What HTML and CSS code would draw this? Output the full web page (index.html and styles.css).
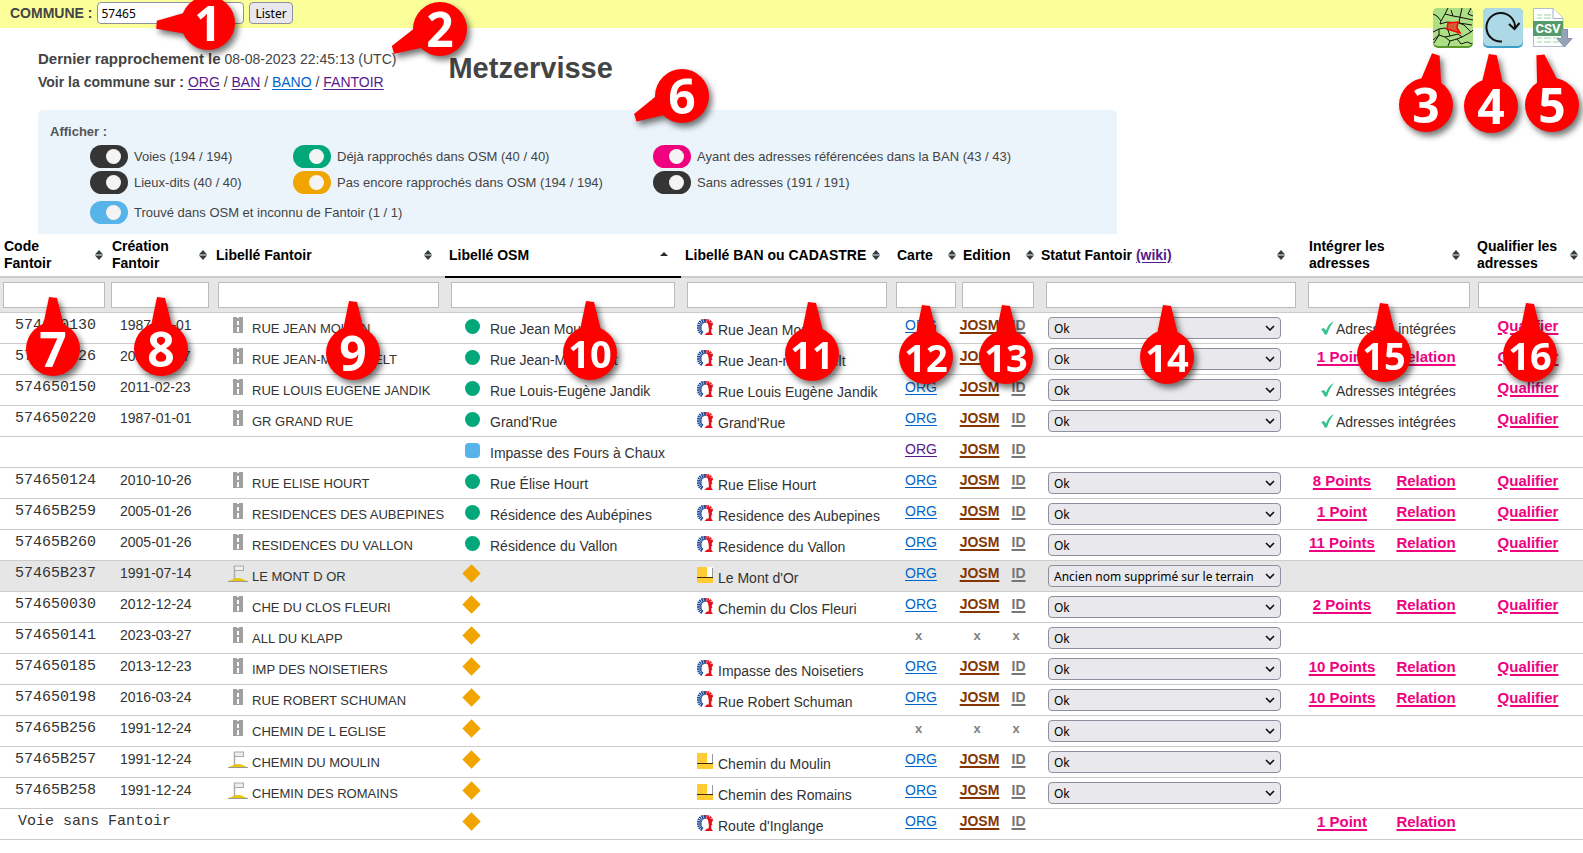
FILE: index.html
```html
<!DOCTYPE html>
<html lang="fr">
<head>
<meta charset="utf-8">
<title>Metzervisse - rapprochement Fantoir</title>
<link rel="stylesheet" href="styles.css">
</head>
<body>
<svg class="sprite" aria-hidden="true">
  <symbol id="sort" viewBox="0 0 8 10"><path d="M0 4.500L4 0L8 4.500zM0 5.500L4 10L8 5.500z" fill="#333c40"/><path d="M0 5H8" stroke="#8d9294"/></symbol>
  <symbol id="asc" viewBox="0 0 8 10"><path d="M0 6L4 2L8 6z" fill="#222b30"/></symbol>
  <symbol id="road" viewBox="0 0 10 16"><path d="M0 0H4V1H6V0H10V16H0z" fill="#a0a0a0"/><path d="M4 4H6V8H4zM4 10H6V15H4z" fill="#fff"/></symbol>
  <symbol id="flag" viewBox="0 0 20 18"><path d="M0 16.500C4 15 6 13 10 13S16 15 20 16.500z" fill="#e6c700"/><path d="M0 16.500H20" stroke="#999"/><path d="M6.500 1V14" stroke="#aaa" stroke-width="1.500"/><rect x="6.500" y="1" width="9" height="4.500" fill="#eee" stroke="#aaa"/></symbol>
  <symbol id="ban" viewBox="0 0 16 16"><g fill="none"><path d="M8 2C4 1.500 2 4 2 8S3 13 6 14.500" stroke="#1c4a97" stroke-width="4" stroke-dasharray="1.400 .6"/><path d="M7 3.500C4.500 4.500 4 7 4 9S4.500 12.500 6 13.500" stroke="#1c4a97" stroke-width="1"/><path d="M8 2C12 1.500 14 3.500 14 6" stroke="#e1101c" stroke-width="4" stroke-dasharray="1.600 .5"/><path d="M11 3C14 5 13 8 13 14" stroke="#e1101c" stroke-width="2.500"/></g><path d="M7.500 16L10 13.500H14L16 16zM11 4L16 5L14.500 8L15.500 10H12z" fill="#e1101c"/></symbol>
  <symbol id="cadastre" viewBox="0 0 16 16"><path d="M0 0H16V16H0z" fill="#fc3"/><path d="M10 0H16V10H10z" fill="#fff"/><path d="M0 10.500H16" stroke="#3a2c10"/><path d="M15.500 1V10" stroke="#999"/></symbol>
  <symbol id="check" viewBox="0 0 14 14"><path d="M1 8L4 7L6 9.500C7.500 5 10 2 14 0C11 4 8.500 8 7 13.500H4.500C4 11.500 2.500 9.500 1 8z" fill="#35c28c"/></symbol>
  <symbol id="tail" viewBox="-60 -60 120 120"><path d="M-4 -52L4 -51L11 -23H-10z" fill="red"/></symbol>
</svg>

<form class="topbar">
  <label for="commune">COMMUNE :</label>
  <input id="commune" class="commune" type="text" value="57465">
  <button class="list-button" type="button">Lister</button>
</form>

<nav class="tools" aria-label="Outils">
  <a href="#" aria-label="Carte"><svg viewBox="0 0 40 40" width="40" height="40"><rect width="40" height="40" rx="5" fill="#5a9a2c"/><rect width="40" height="38" rx="5" fill="#addf85"/><g fill="none" stroke="#111" stroke-width="1"><path d="M0 6L4 8L8 13L7 16L14 14L26 15L39 17M15 0L12 6L20 8L26 9L40 12M12 6L8 13M29 0L27 9L26 15L31 17L38 24L40 22M20 8L18 2M0 24L6 21L12 20L15 22L17 28L25 26L29 29L38 24M0 32L6 27L12 29L17 28M6 21L6 27L1 35M12 29L17 33L15 38M17 33L24 31L29 29M24 31L28 36L34 34L39 36M38 0L35 6L40 8"/></g><path d="M15 15L25 14L24 20L27 25L14 21z" fill="#d05c38" stroke="red" stroke-width="1.500"/></svg></a>
  <a href="#" aria-label="Rafraîchir"><svg viewBox="0 0 40 40" width="40" height="40"><rect width="40" height="40" rx="5" fill="#3a9fc8"/><rect width="40" height="38" rx="5" fill="#add8e6"/><path d="M19 33.500A14.300 14.300 0 1 1 32 20V21M26 16L31.500 21L36.500 15" fill="none" stroke="#111" stroke-width="2"/></svg></a>
  <a href="#" aria-label="Exporter en CSV"><svg viewBox="0 0 40 40" width="40" height="40"><path d="M.5 .5H20L30 10V38.500H.5z" fill="#fdfefe" stroke="#b3bcc8"/><path d="M20 .5V10.500H30" fill="#fff" stroke="#a5b0bf"/><path d="M4 7H9M11 7H18M4 10H9M11 10H18M4 30H9M11 30H18M20 30H26M4 34H9M11 34H18M20 34H26" stroke="#cfe8cf" stroke-width="2"/><path d="M0 13H30V28H0z" fill="#549a6b"/><text class="csv-text" x="15" y="25" text-anchor="middle">CSV</text><path d="M28.500 21.500H34.500V30.500H39L31.500 39L24 30.500H28.500z" fill="#94a3b8" stroke="#8190a6"/></svg></a>
</nav>

<header class="summary">
  <div class="meta">
    <div><strong class="stamp">Dernier rapprochement le</strong> 08-08-2023 22:45:13 (UTC)</div>
    <div><strong>Voir la commune sur :</strong> <a class="visited" href="#">ORG</a> / <a class="visited" href="#">BAN</a> / <a href="#">BANO</a> / <a class="visited" href="#">FANTOIR</a></div>
  </div>
  <h1>Metzervisse</h1>
</header>

<section class="filters">
  <h2>Afficher :</h2>
  <div class="filter-grid">
    <label><input class="toggle dark" type="checkbox" checked>Voies (194 / 194)</label>
    <label><input class="toggle green" type="checkbox" checked>Déjà rapprochés dans OSM (40 / 40)</label>
    <label><input class="toggle pink" type="checkbox" checked>Ayant des adresses référencées dans la BAN (43 / 43)</label>
    <label><input class="toggle dark" type="checkbox" checked>Lieux-dits (40 / 40)</label>
    <label><input class="toggle orange" type="checkbox" checked>Pas encore rapprochés dans OSM (194 / 194)</label>
    <label><input class="toggle dark" type="checkbox" checked>Sans adresses (191 / 191)</label>
  </div>
  <div class="filter-last">
    <label><input class="toggle blue" type="checkbox" checked>Trouvé dans OSM et inconnu de Fantoir (1 / 1)</label>
  </div>
</section>

<table class="list">
  <colgroup><col class="c-code"><col class="c-date"><col class="c-fantoir"><col class="c-osm"><col class="c-ban"><col class="c-map"><col class="c-josm"><col class="c-id"><col class="c-status"><col class="c-points"><col class="c-relation"><col class="c-qualify"></colgroup>
  <thead>
    <tr class="heads">
      <th><div class="head">Code<br>Fantoir<svg class="sort"><use href="#sort"/></svg></div></th>
      <th><div class="head">Création<br>Fantoir<svg class="sort"><use href="#sort"/></svg></div></th>
      <th><div class="head wide">Libellé Fantoir<svg class="sort"><use href="#sort"/></svg></div></th>
      <th class="sorted"><div class="head wide">Libellé OSM<svg class="sort"><use href="#asc"/></svg></div></th>
      <th><div class="head wide">Libellé BAN ou CADASTRE<svg class="sort"><use href="#sort"/></svg></div></th>
      <th><div class="head tight">Carte<svg class="sort"><use href="#sort"/></svg></div></th>
      <th colspan="2"><div class="head tight">Edition<svg class="sort"><use href="#sort"/></svg></div></th>
      <th><div class="head widest"><span>Statut Fantoir <a class="visited" href="#">(wiki)</a></span><svg class="sort"><use href="#sort"/></svg></div></th>
      <th colspan="2"><div class="head wide">Intégrer les<br>adresses<svg class="sort"><use href="#sort"/></svg></div></th>
      <th><div class="head">Qualifier les<br>adresses<svg class="sort"><use href="#sort"/></svg></div></th>
    </tr>
    <tr class="search">
      <td><input type="text" aria-label="Filtrer Code Fantoir"></td>
      <td><input type="text" aria-label="Filtrer Création Fantoir"></td>
      <td class="mid"><input type="text" aria-label="Filtrer Libellé Fantoir"></td>
      <td class="mid"><input type="text" aria-label="Filtrer Libellé OSM"></td>
      <td class="mid"><input type="text" aria-label="Filtrer Libellé BAN ou CADASTRE"></td>
      <td><input type="text" aria-label="Filtrer Carte"></td>
      <td colspan="2"><input type="text" aria-label="Filtrer Edition"></td>
      <td class="big"><input type="text" aria-label="Filtrer Statut Fantoir"></td>
      <td colspan="2"><input type="text" aria-label="Filtrer Intégrer les adresses"></td>
      <td class="last"><input type="text" aria-label="Filtrer Qualifier les adresses"></td>
    </tr>
  </thead>
  <tbody>
    <tr><td class="code">574650130</td><td class="date">1987-01-01</td><td><div class="fantoir"><svg class="road"><use href="#road"/></svg>RUE JEAN MOULIN</div></td><td><div class="osm"><i class="dot"></i>Rue Jean Moulin</div></td><td><div class="ban"><svg class="pic"><use href="#ban"/></svg>Rue Jean Moulin</div></td><td class="map"><a href="#">ORG</a></td><td class="josm"><a href="#">JOSM</a></td><td class="id"><a href="#">ID</a></td><td class="status"><select aria-label="Statut"><option>Ok</option></select></td><td colspan="2"><div class="done"><svg class="check"><use href="#check"/></svg>Adresses intégrées</div></td><td class="pink-link"><a href="#">Qualifier</a></td></tr>
    <tr><td class="code">574650126</td><td class="date">2008-11-07</td><td><div class="fantoir"><svg class="road"><use href="#road"/></svg>RUE JEAN-MARIE PELT</div></td><td><div class="osm"><i class="dot"></i>Rue Jean-Marie Pelt</div></td><td><div class="ban"><svg class="pic"><use href="#ban"/></svg>Rue Jean-marie Pelt</div></td><td class="map"><a href="#">ORG</a></td><td class="josm"><a href="#">JOSM</a></td><td class="id"><a href="#">ID</a></td><td class="status"><select aria-label="Statut"><option>Ok</option></select></td><td class="pink-link"><a href="#">1 Point</a></td><td class="pink-link"><a href="#">Relation</a></td><td class="pink-link"><a href="#">Qualifier</a></td></tr>
    <tr><td class="code">574650150</td><td class="date">2011-02-23</td><td><div class="fantoir"><svg class="road"><use href="#road"/></svg>RUE LOUIS EUGENE JANDIK</div></td><td><div class="osm"><i class="dot"></i>Rue Louis-Eugène Jandik</div></td><td><div class="ban"><svg class="pic"><use href="#ban"/></svg>Rue Louis Eugène Jandik</div></td><td class="map"><a href="#">ORG</a></td><td class="josm"><a href="#">JOSM</a></td><td class="id"><a href="#">ID</a></td><td class="status"><select aria-label="Statut"><option>Ok</option></select></td><td colspan="2"><div class="done"><svg class="check"><use href="#check"/></svg>Adresses intégrées</div></td><td class="pink-link"><a href="#">Qualifier</a></td></tr>
    <tr><td class="code">574650220</td><td class="date">1987-01-01</td><td><div class="fantoir"><svg class="road"><use href="#road"/></svg>GR GRAND RUE</div></td><td><div class="osm"><i class="dot"></i>Grand'Rue</div></td><td><div class="ban"><svg class="pic"><use href="#ban"/></svg>Grand'Rue</div></td><td class="map"><a href="#">ORG</a></td><td class="josm"><a href="#">JOSM</a></td><td class="id"><a href="#">ID</a></td><td class="status"><select aria-label="Statut"><option>Ok</option></select></td><td colspan="2"><div class="done"><svg class="check"><use href="#check"/></svg>Adresses intégrées</div></td><td class="pink-link"><a href="#">Qualifier</a></td></tr>
    <tr><td></td><td></td><td></td><td><div class="osm"><i class="dot square"></i>Impasse des Fours à Chaux</div></td><td></td><td class="map"><a class="visited" href="#">ORG</a></td><td class="josm"><a href="#">JOSM</a></td><td class="id"><a href="#">ID</a></td><td></td><td></td><td></td><td></td></tr>
    <tr><td class="code">574650124</td><td class="date">2010-10-26</td><td><div class="fantoir"><svg class="road"><use href="#road"/></svg>RUE ELISE HOURT</div></td><td><div class="osm"><i class="dot"></i>Rue Élise Hourt</div></td><td><div class="ban"><svg class="pic"><use href="#ban"/></svg>Rue Elise Hourt</div></td><td class="map"><a href="#">ORG</a></td><td class="josm"><a href="#">JOSM</a></td><td class="id"><a href="#">ID</a></td><td class="status"><select aria-label="Statut"><option>Ok</option></select></td><td class="pink-link"><a href="#">8 Points</a></td><td class="pink-link"><a href="#">Relation</a></td><td class="pink-link"><a href="#">Qualifier</a></td></tr>
    <tr><td class="code">57465B259</td><td class="date">2005-01-26</td><td><div class="fantoir"><svg class="road"><use href="#road"/></svg>RESIDENCES DES AUBEPINES</div></td><td><div class="osm"><i class="dot"></i>Résidence des Aubépines</div></td><td><div class="ban"><svg class="pic"><use href="#ban"/></svg>Residence des Aubepines</div></td><td class="map"><a href="#">ORG</a></td><td class="josm"><a href="#">JOSM</a></td><td class="id"><a href="#">ID</a></td><td class="status"><select aria-label="Statut"><option>Ok</option></select></td><td class="pink-link"><a href="#">1 Point</a></td><td class="pink-link"><a href="#">Relation</a></td><td class="pink-link"><a href="#">Qualifier</a></td></tr>
    <tr><td class="code">57465B260</td><td class="date">2005-01-26</td><td><div class="fantoir"><svg class="road"><use href="#road"/></svg>RESIDENCES DU VALLON</div></td><td><div class="osm"><i class="dot"></i>Résidence du Vallon</div></td><td><div class="ban"><svg class="pic"><use href="#ban"/></svg>Residence du Vallon</div></td><td class="map"><a href="#">ORG</a></td><td class="josm"><a href="#">JOSM</a></td><td class="id"><a href="#">ID</a></td><td class="status"><select aria-label="Statut"><option>Ok</option></select></td><td class="pink-link"><a href="#">11 Points</a></td><td class="pink-link"><a href="#">Relation</a></td><td class="pink-link"><a href="#">Qualifier</a></td></tr>
    <tr class="removed"><td class="code">57465B237</td><td class="date">1991-07-14</td><td><div class="fantoir"><svg class="flag"><use href="#flag"/></svg>LE MONT D OR</div></td><td><div class="osm"><i class="dot diamond"></i></div></td><td><div class="ban"><svg class="pic"><use href="#cadastre"/></svg>Le Mont d'Or</div></td><td class="map"><a href="#">ORG</a></td><td class="josm"><a href="#">JOSM</a></td><td class="id"><a href="#">ID</a></td><td class="status"><select aria-label="Statut"><option>Ancien nom supprimé sur le terrain</option></select></td><td></td><td></td><td></td></tr>
    <tr><td class="code">574650030</td><td class="date">2012-12-24</td><td><div class="fantoir"><svg class="road"><use href="#road"/></svg>CHE DU CLOS FLEURI</div></td><td><div class="osm"><i class="dot diamond"></i></div></td><td><div class="ban"><svg class="pic"><use href="#ban"/></svg>Chemin du Clos Fleuri</div></td><td class="map"><a href="#">ORG</a></td><td class="josm"><a href="#">JOSM</a></td><td class="id"><a href="#">ID</a></td><td class="status"><select aria-label="Statut"><option>Ok</option></select></td><td class="pink-link"><a href="#">2 Points</a></td><td class="pink-link"><a href="#">Relation</a></td><td class="pink-link"><a href="#">Qualifier</a></td></tr>
    <tr><td class="code">574650141</td><td class="date">2023-03-27</td><td><div class="fantoir"><svg class="road"><use href="#road"/></svg>ALL DU KLAPP</div></td><td><div class="osm"><i class="dot diamond"></i></div></td><td></td><td class="map none">x</td><td class="josm none">x</td><td class="id none">x</td><td class="status"><select aria-label="Statut"><option>Ok</option></select></td><td></td><td></td><td></td></tr>
    <tr><td class="code">574650185</td><td class="date">2013-12-23</td><td><div class="fantoir"><svg class="road"><use href="#road"/></svg>IMP DES NOISETIERS</div></td><td><div class="osm"><i class="dot diamond"></i></div></td><td><div class="ban"><svg class="pic"><use href="#ban"/></svg>Impasse des Noisetiers</div></td><td class="map"><a href="#">ORG</a></td><td class="josm"><a href="#">JOSM</a></td><td class="id"><a href="#">ID</a></td><td class="status"><select aria-label="Statut"><option>Ok</option></select></td><td class="pink-link"><a href="#">10 Points</a></td><td class="pink-link"><a href="#">Relation</a></td><td class="pink-link"><a href="#">Qualifier</a></td></tr>
    <tr><td class="code">574650198</td><td class="date">2016-03-24</td><td><div class="fantoir"><svg class="road"><use href="#road"/></svg>RUE ROBERT SCHUMAN</div></td><td><div class="osm"><i class="dot diamond"></i></div></td><td><div class="ban"><svg class="pic"><use href="#ban"/></svg>Rue Robert Schuman</div></td><td class="map"><a href="#">ORG</a></td><td class="josm"><a href="#">JOSM</a></td><td class="id"><a href="#">ID</a></td><td class="status"><select aria-label="Statut"><option>Ok</option></select></td><td class="pink-link"><a href="#">10 Points</a></td><td class="pink-link"><a href="#">Relation</a></td><td class="pink-link"><a href="#">Qualifier</a></td></tr>
    <tr><td class="code">57465B256</td><td class="date">1991-12-24</td><td><div class="fantoir"><svg class="road"><use href="#road"/></svg>CHEMIN DE L EGLISE</div></td><td><div class="osm"><i class="dot diamond"></i></div></td><td></td><td class="map none">x</td><td class="josm none">x</td><td class="id none">x</td><td class="status"><select aria-label="Statut"><option>Ok</option></select></td><td></td><td></td><td></td></tr>
    <tr><td class="code">57465B257</td><td class="date">1991-12-24</td><td><div class="fantoir"><svg class="flag"><use href="#flag"/></svg>CHEMIN DU MOULIN</div></td><td><div class="osm"><i class="dot diamond"></i></div></td><td><div class="ban"><svg class="pic"><use href="#cadastre"/></svg>Chemin du Moulin</div></td><td class="map"><a href="#">ORG</a></td><td class="josm"><a href="#">JOSM</a></td><td class="id"><a href="#">ID</a></td><td class="status"><select aria-label="Statut"><option>Ok</option></select></td><td></td><td></td><td></td></tr>
    <tr><td class="code">57465B258</td><td class="date">1991-12-24</td><td><div class="fantoir"><svg class="flag"><use href="#flag"/></svg>CHEMIN DES ROMAINS</div></td><td><div class="osm"><i class="dot diamond"></i></div></td><td><div class="ban"><svg class="pic"><use href="#cadastre"/></svg>Chemin des Romains</div></td><td class="map"><a href="#">ORG</a></td><td class="josm"><a href="#">JOSM</a></td><td class="id"><a href="#">ID</a></td><td class="status"><select aria-label="Statut"><option>Ok</option></select></td><td></td><td></td><td></td></tr>
    <tr><td class="code orphan" colspan="2">Voie sans Fantoir</td><td></td><td><div class="osm"><i class="dot diamond"></i></div></td><td><div class="ban"><svg class="pic"><use href="#ban"/></svg>Route d'Inglange</div></td><td class="map"><a href="#">ORG</a></td><td class="josm"><a href="#">JOSM</a></td><td class="id"><a href="#">ID</a></td><td></td><td class="pink-link"><a href="#">1 Point</a></td><td class="pink-link"><a href="#">Relation</a></td><td></td></tr>
  </tbody>
</table>

<div class="markers">
  <div class="marker m1"><svg><use href="#tail"/></svg><b>1</b></div>
  <div class="marker m2"><svg><use href="#tail"/></svg><b>2</b></div>
  <div class="marker m3"><svg><use href="#tail"/></svg><b>3</b></div>
  <div class="marker m4"><svg><use href="#tail"/></svg><b>4</b></div>
  <div class="marker m5"><svg><use href="#tail"/></svg><b>5</b></div>
  <div class="marker m6"><svg><use href="#tail"/></svg><b>6</b></div>
  <div class="marker m7"><svg><use href="#tail"/></svg><b>7</b></div>
  <div class="marker m8"><svg><use href="#tail"/></svg><b>8</b></div>
  <div class="marker m9"><svg><use href="#tail"/></svg><b>9</b></div>
  <div class="marker duo m10"><svg><use href="#tail"/></svg><b>10</b></div>
  <div class="marker duo m11"><svg><use href="#tail"/></svg><b>11</b></div>
  <div class="marker duo m12"><svg><use href="#tail"/></svg><b>12</b></div>
  <div class="marker duo m13"><svg><use href="#tail"/></svg><b>13</b></div>
  <div class="marker duo m14"><svg><use href="#tail"/></svg><b>14</b></div>
  <div class="marker duo m15"><svg><use href="#tail"/></svg><b>15</b></div>
  <div class="marker duo m16"><svg><use href="#tail"/></svg><b>16</b></div>
</div>
</body>
</html>
```
FILE: styles.css
```css
* { box-sizing: border-box; }
body {
  position: relative;
  margin: 0;
  background: #fff;
  color: #444;
  font: 14px/17px "Liberation Sans", Arial, sans-serif;
}
a { color: #06c; text-underline-offset: 2px; }
a.visited { color: #551a8b; }
.sprite { display: none; }

.topbar {
  display: flex;
  align-items: center;
  gap: 5px;
  height: 28px;
  padding: 0 10px 2px;
  background: #fbff9a;
  font-weight: bold;
}
.commune, .list-button, select {
  height: 22px;
  border: 1px solid #8f8f9d;
  border-radius: 4px;
  color: #000;
  font: 12px "Noto Sans", sans-serif;
}
.commune { width: 147px; padding: 0 3px; background: #fff; }
.list-button { padding: 0 5px; background: #e9e9ed; }

.tools {
  position: absolute;
  top: 8px;
  right: 10px;
  display: flex;
  gap: 10px;
}
.tools svg { display: block; }
.csv-text { fill: #fff; font: bold 13px Roboto, sans-serif; }

.summary {
  display: flex;
  gap: 52px;
  height: 82px;
  padding: 20px 38px 0;
}
.meta { line-height: 23px; white-space: nowrap; }
.stamp { font-size: 15px; line-height: 20px; }
h1 { margin: 0; font-size: 29px; line-height: 40px; }

.filters {
  max-width: 1079px;
  margin-left: 38px;
  padding: 13px 12px 10px;
  border-radius: 5px 5px 0 0;
  background: #ebf4fb;
  font-size: 13px;
}
.filters h2 { margin: 0 0 4px; color: #555; font-size: 13px; line-height: 18px; }
.filter-grid {
  display: grid;
  grid-template-columns: 203px 360px 1fr;
  row-gap: 3px;
  padding-left: 40px;
}
.filter-last { padding: 7px 0 0 40px; }
.filters label { display: flex; align-items: center; gap: 6px; }
.toggle {
  appearance: none;
  width: 38px;
  height: 23px;
  margin: 0;
  padding: 4px 0 0 16px;
  border-radius: 12px;
}
.toggle::before {
  content: "";
  display: block;
  width: 15px;
  height: 15px;
  border-radius: 50%;
  background: #f4f4f4;
}
.dark { background: #353535; }
.green { background: #02a77a; }
.pink { background: #f0027f; }
.orange { background: #f0a500; }
.blue { background: #56b4e9; }

.list {
  width: 100%;
  table-layout: fixed;
  border-collapse: separate;
  border-spacing: 0;
}
.c-code { width: 108px; }
.c-date { width: 104px; }
.c-fantoir { width: 233px; }
.c-osm { width: 236px; }
.c-ban { width: 212px; }
.c-map { width: 66px; }
.c-josm { width: 41px; }
.c-id { width: 37px; }
.c-status { width: 268px; }
.c-points { width: 74px; }
.c-relation { width: 94px; }
.c-qualify { width: 110px; }

th, td { padding: 0; text-align: left; vertical-align: top; white-space: nowrap; }
th { height: 44px; border-bottom: 2px solid #ccc; color: #000; vertical-align: middle; }
th.sorted { border-color: #000; }
.head { position: relative; padding: 0 17px 0 4px; }
.sort { position: absolute; top: 50%; right: 5px; width: 8px; height: 10px; margin-top: -5px; }
.tight .sort { right: 3px; }
.wide .sort { right: 13px; }
.widest .sort { right: 20px; }

.search td { height: 35px; padding: 4px 3px; border-bottom: 1px solid #ccc; background: #e6e6e6; }
.search .mid { padding: 4px 6px; }
.search .big { padding: 4px 9px; }
.search .last { padding: 4px 0 4px 5px; }
.search input {
  display: block;
  width: 100%;
  height: 26px;
  border: 1px solid #bbb;
  background: #fff;
}
.search .last input { border-right: 0; }

tbody td { height: 31px; padding-top: 4px; border-bottom: 1px solid #ccc; color: #333; }
.removed td { background: #e6e6e6; }
.code { padding-left: 15px; font: 15px/18px "Liberation Mono", "Courier New", monospace; }
.orphan { padding-left: 18px; }
.date { padding-left: 12px; }
.fantoir, .osm, .ban, .done { display: flex; align-items: flex-start; height: 16px; }
.fantoir { padding-left: 16px; font-size: 13px; line-height: 23px; }
.osm { padding-left: 20px; line-height: 25px; }
.ban { padding-left: 16px; line-height: 27px; }
.done { padding-left: 15px; line-height: 25px; }
.road { flex: none; width: 10px; height: 16px; margin: 0 9px 0 5px; }
.flag { flex: none; width: 20px; height: 18px; margin-right: 4px; }
.pic { flex: none; width: 16px; height: 16px; margin: 2px 5px 0 0; }
.check { flex: none; width: 14px; height: 14px; margin: 4px 2px 0 0; }
.dot { flex: none; width: 15px; height: 15px; margin: 2px 10px 0 0; border-radius: 50%; background: #02a77a; }
.square { border-radius: 4px; background: #56b4e9; }
.diamond { width: 13px; height: 13px; border-radius: 0; background: #f0a500; transform: rotate(45deg); }
.map, .josm, .id, .pink-link { text-align: center; }
.map { padding-right: 10px; }
.josm a, .id a, .pink-link a { font-weight: bold; text-decoration-thickness: 2px; }
.josm a { color: #853600; }
.id a { color: #777; }
.pink-link a { color: #f0027f; font-size: 15px; }
.none { padding-right: 5px; color: #808080; font-size: 13px; font-weight: bold; }
.map.none { padding-right: 15px; }
.status { padding-left: 11px; }
select {
  appearance: none;
  display: block;
  width: 233px;
  padding: 0 20px 0 5px;
  background: #e9e9ed url("data:image/svg+xml,%3Csvg xmlns='http://www.w3.org/2000/svg' width='10' height='6'%3E%3Cpath d='M1 1l4 4l4-4' fill='none' stroke='%23111' stroke-width='1.600'/%3E%3C/svg%3E") no-repeat right 5px center;
}

/* Numbered callouts laid over the page */
.markers { position: absolute; inset: 0; overflow: hidden; pointer-events: none; }
.marker {
  position: absolute;
  width: 54px;
  height: 54px;
  border-radius: 50%;
  background: red;
  color: #fff;
  font: 48px/54px "Open Sans", sans-serif;
  text-align: center;
  filter: drop-shadow(3px 4px 3px rgba(0, 0, 0, .55));
}
.marker svg { position: absolute; top: -33px; left: -33px; width: 120px; height: 120px; }
.marker b { position: relative; }
.duo { font-size: 38px; }
.m1 { left: 181px; top: -4px; }
.m1 svg { rotate: -92deg; }
.m2 { left: 413px; top: 2px; }
.m2 svg { rotate: -114deg; }
.m3 { right: 130px; top: 78px; }
.m3 svg { rotate: 11deg; }
.m4 { right: 65px; top: 79px; }
.m4 svg { rotate: 2deg; }
.m5 { right: 4px; top: 78px; }
.m5 svg { rotate: -13deg; }
.m6 { left: 655px; top: 69px; }
.m6 svg { rotate: -115deg; }
.m7 { left: 26px; top: 322px; }
.m8 { left: 134px; top: 322px; }
.m9 { left: 326px; top: 326px; }
.m10 { left: 563px; top: 326px; }
.m11 { left: 785px; top: 327px; }
.m12 { left: 899px; top: 330px; }
.m13 { left: 979px; top: 330px; }
.m14 { left: 1140px; top: 330px; }
.m15 { left: 1357px; top: 328px; }
.m16 { left: 1503px; top: 328px; }
```
